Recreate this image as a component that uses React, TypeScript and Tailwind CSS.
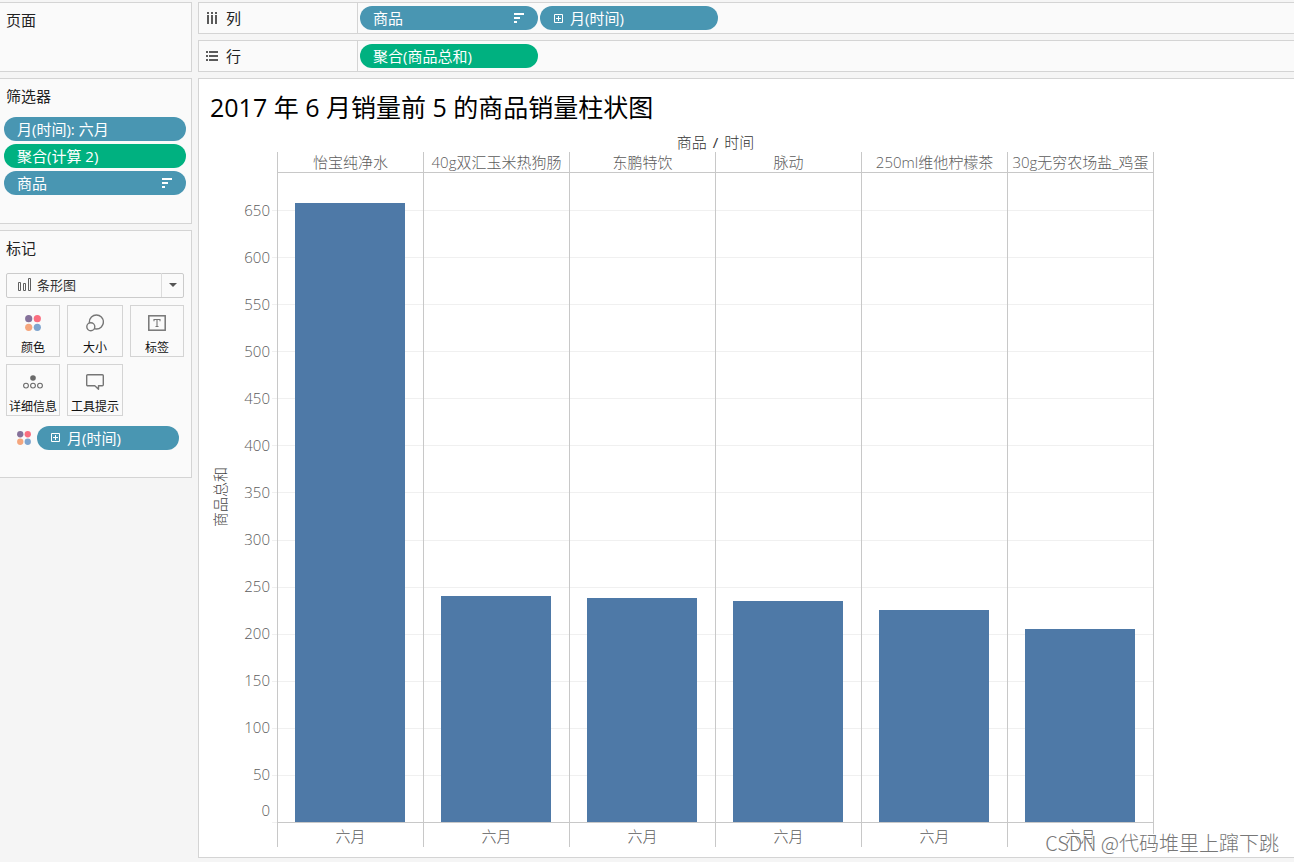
import type { ReactNode } from 'react';

const UI_FONT = "font-['Open_Sans','Noto_Sans_CJK_SC',sans-serif]";

const AXIS_TICKS = [650, 600, 550, 500, 450, 400, 350, 300, 250, 200, 150, 100, 50];
const AXIS_MAX = 689.3;

const PRODUCTS = [
  { name: '怡宝纯净水', value: 657 },
  { name: '40g双汇玉米热狗肠', value: 240 },
  { name: '东鹏特饮', value: 238 },
  { name: '脉动', value: 235 },
  { name: '250ml维他柠檬茶', value: 225 },
  { name: '30g无穷农场盐_鸡蛋', value: 205 },
];

function SortIcon() {
  return (
    <svg width="10" height="10" viewBox="0 0 10 10" fill="currentColor" aria-hidden="true">
      <path d="M0 0h10v2H0zM0 4h6v2H0zM0 8h3v2H0z" />
    </svg>
  );
}

function ExpandIcon() {
  return (
    <svg width="9" height="9" viewBox="0 0 9 9" fill="none" stroke="currentColor" aria-hidden="true">
      <path d="M.5 .5h8v8h-8zM2 4.5h5M4.5 2v5" />
    </svg>
  );
}

function ColumnsIcon() {
  return (
    <svg width="12" height="12" viewBox="0 0 12 12" fill="#5a5a5a" aria-hidden="true">
      <path d="M1 0h2v2H1zM5 0h2v2H5zM9 0h2v2H9zM1 3h2v9H1zM5 3h2v9H5zM9 3h2v9H9z" />
    </svg>
  );
}

function RowsIcon() {
  return (
    <svg width="12" height="10" viewBox="0 0 12 10" fill="#5a5a5a" aria-hidden="true">
      <path d="M0 0h2v2H0zM0 4h2v2H0zM0 8h2v2H0zM3 0h9v2H3zM3 4h9v2H3zM3 8h9v2H3z" />
    </svg>
  );
}

function ColorDots({ size }: { size: number }) {
  return (
    <svg width={size} height={size} viewBox="0 0 16 16" aria-hidden="true">
      <circle cx="3.7" cy="3.7" r="3.6" fill="#85719a" />
      <circle cx="12.3" cy="3.7" r="3.6" fill="#fa6e80" />
      <circle cx="3.7" cy="12.3" r="3.6" fill="#f5a67d" />
      <circle cx="12.3" cy="12.3" r="3.6" fill="#7fa5cf" />
    </svg>
  );
}

function SizeIcon() {
  return (
    <svg width="18" height="18" viewBox="0 0 18 18" fill="#fafafa" stroke="#767676" strokeWidth="1.4" aria-hidden="true">
      <circle cx="10.4" cy="8" r="7" />
      <circle cx="4.8" cy="12.8" r="4" />
    </svg>
  );
}

function LabelIcon() {
  return (
    <svg width="18" height="16" viewBox="0 0 18 16" fill="none" stroke="#767676" aria-hidden="true">
      <rect x="0.8" y="0.8" width="16.4" height="14.4" strokeWidth="1.5" />
      <path d="M6 6.2V4.5h6v1.7M9 4.5v7M7.5 11.5h3" strokeWidth="1.1" />
    </svg>
  );
}

function DetailIcon() {
  return (
    <svg width="20" height="14" viewBox="0 0 20 14" fill="none" stroke="#6a6a6a" strokeWidth="1.1" aria-hidden="true">
      <circle cx="10" cy="3" r="2.8" fill="#6a6a6a" stroke="none" />
      <circle cx="3" cy="10.6" r="2.4" />
      <circle cx="10" cy="10.6" r="2.4" />
      <circle cx="17" cy="10.6" r="2.4" />
    </svg>
  );
}

function TooltipIcon() {
  return (
    <svg width="18" height="16" viewBox="0 0 18 16" fill="none" stroke="#767676" strokeWidth="1.4" strokeLinejoin="round" aria-hidden="true">
      <path d="M1.7 .7h14.6a1 1 0 0 1 1 1v9a1 1 0 0 1-1 1H12.5v3.6L8.8 11.7H1.7a1 1 0 0 1-1-1v-9a1 1 0 0 1 1-1z" />
    </svg>
  );
}

function BarsIcon() {
  return (
    <svg width="14" height="13" viewBox="0 0 14 13" fill="none" stroke="#5f5f5f" aria-hidden="true">
      <path d="M.5 4.5h2v8h-2zM5.5 5.5h2v7h-2zM10.5 .5h2v12h-2z" />
    </svg>
  );
}

type PillProps = { label: string; green?: boolean; sort?: boolean; expand?: boolean; className?: string };

function Pill({ label, green, sort, expand, className = 'w-full' }: PillProps) {
  return (
    <button
      type="button"
      className={`flex h-6 items-center gap-[7px] rounded-full pr-[14px] text-[15px] leading-6 whitespace-nowrap text-white ${
        green ? 'bg-[#00b180]' : 'bg-[#4996b2]'
      } ${expand ? 'pl-[14px]' : 'pl-[13px]'} ${className}`}
    >
      {expand && <ExpandIcon />}
      <span className="flex-1 text-left">{label}</span>
      {sort && <SortIcon />}
    </button>
  );
}

function Card({ title, className, children }: { title: string; className: string; children?: ReactNode }) {
  return (
    <section className={`border-y border-r border-[#d4d4d4] bg-[#fafafa] ${className}`}>
      <h2 className="px-[6px] pt-[5px] text-[15px] leading-6">{title}</h2>
      {children}
    </section>
  );
}

function MarkButton({ icon, label }: { icon: ReactNode; label: string }) {
  return (
    <button
      type="button"
      className="flex h-[52px] flex-col items-center border border-[#d4d4d4] bg-[#fafafa] text-xs leading-4 whitespace-nowrap text-[#111]"
    >
      <span className="flex h-[34px] items-center">{icon}</span>
      <span>{label}</span>
    </button>
  );
}

function Shelf({ icon, label, children }: { icon: ReactNode; label: string; children: ReactNode }) {
  return (
    <section className="flex h-8 border-y border-l border-[#d4d4d4] bg-[#fafafa]">
      <h2 className="flex w-[159px] shrink-0 items-center gap-2 border-r border-[#d4d4d4] pl-[7px] text-[15px]">
        {icon}
        {label}
      </h2>
      <div className="flex items-center gap-[2px] pl-[2px]">{children}</div>
    </section>
  );
}

function Sidebar() {
  return (
    <aside className="flex w-48 shrink-0 flex-col gap-[6px]">
      <Card title="页面" className="h-[70px]" />
      <Card title="筛选器" className="h-[146px]">
        <div className="flex flex-col gap-[3px] pt-[9px] pr-[5px] pl-1">
          <Pill label="月(时间): 六月" />
          <Pill label="聚合(计算 2)" green />
          <Pill label="商品" sort />
        </div>
      </Card>
      <Card title="标记" className="h-[248px]">
        <div className="flex flex-col gap-[7px] pt-3 pr-[7px] pl-[6px]">
          <div className="relative">
            <select
              aria-label="标记类型"
              className="h-[25px] w-full appearance-none rounded-xs border border-[#cbcbcb] bg-[#fafafa] pl-[30px] text-[13px] leading-[22px] text-[#333]"
            >
              <option>条形图</option>
            </select>
            <span className="pointer-events-none absolute inset-y-0 left-3 flex items-center">
              <BarsIcon />
            </span>
            <span className="pointer-events-none absolute inset-y-px right-px flex w-[22px] items-center justify-center border-l border-[#dcdcdc]">
              <svg width="8" height="4" viewBox="0 0 8 4" fill="#555" aria-hidden="true">
                <path d="M0 0h8L4 4z" />
              </svg>
            </span>
          </div>
          <div className="grid grid-cols-[54fr_56fr_54fr] gap-[7px]">
            <MarkButton icon={<ColorDots size={16} />} label="颜色" />
            <MarkButton icon={<SizeIcon />} label="大小" />
            <MarkButton icon={<LabelIcon />} label="标签" />
            <MarkButton icon={<DetailIcon />} label="详细信息" />
            <MarkButton icon={<TooltipIcon />} label="工具提示" />
          </div>
          <div className="flex items-center gap-[6px] pt-[3px] pr-[5px] pl-[11px]">
            <ColorDots size={14} />
            <Pill label="月(时间)" expand className="flex-1" />
          </div>
        </div>
      </Card>
    </aside>
  );
}

function Chart() {
  return (
    <div className="flex text-[15px] font-light text-[#5c5c5c]">
      <div className="flex w-[73px] shrink-0 pt-[39px] pb-[25px]">
        <div className="flex w-[42px] items-center justify-center text-[#444]">
          <span className="rotate-180 leading-5 [text-orientation:sideways] [writing-mode:vertical-rl]">商品总和</span>
        </div>
        <div className="flex flex-1 flex-col pt-[14px] pr-[2px] text-right">
          {AXIS_TICKS.map((tick) => (
            <span key={tick} className="flex flex-1 items-center justify-end">
              {tick}
            </span>
          ))}
          <span className="flex h-6 items-center justify-end">0</span>
        </div>
      </div>
      <div className="w-full max-w-[882px]">
        <div className="flex h-[18px] justify-center gap-[6px] pl-[5px] leading-4 text-[#333]">
          <span>商品</span>
          <span className="font-normal">/</span>
          <span>时间</span>
        </div>
        <div className="grid">
          <div className="col-start-1 row-start-1 flex flex-col pt-[58px] pb-6" aria-hidden="true">
            {AXIS_TICKS.map((tick) => (
              <div key={tick} className="flex-1 border-t border-[#f0f0f0]" />
            ))}
            <div className="h-px bg-[#f0f0f0]" />
          </div>
          <div className="col-start-1 row-start-1 pl-[5px]">
            <div className="grid grid-cols-6 border-r border-[#c8c8c8]">
              {PRODUCTS.map((product) => (
                <div key={product.name} className="min-w-0 border-l border-[#c8c8c8] text-center whitespace-nowrap">
                  <div className="flex h-[21px] items-center justify-center border-b border-[#c8c8c8]">{product.name}</div>
                  <div className="flex h-[650px] items-end border-b border-[#c8c8c8] pr-[18px] pl-[17px]">
                    <div
                      className="w-full bg-[#4e79a7]"
                      style={{ height: `${(product.value / AXIS_MAX) * 100}%` }}
                    />
                  </div>
                  <div className="h-6 pt-px leading-6">六月</div>
                </div>
              ))}
            </div>
          </div>
        </div>
      </div>
    </div>
  );
}

export default function App() {
  return (
    <div className={`flex min-h-screen gap-[6px] bg-[#f5f5f5] pt-[2px] pb-1 text-[#222] ${UI_FONT}`}>
      <Sidebar />
      <main className="flex min-w-0 flex-1 flex-col gap-[6px]">
        <Shelf icon={<ColumnsIcon />} label="列">
          <Pill label="商品" sort className="w-[178px]" />
          <Pill label="月(时间)" expand className="w-[178px]" />
        </Shelf>
        <Shelf icon={<RowsIcon />} label="行">
          <Pill label="聚合(商品总和)" green className="w-[178px]" />
        </Shelf>
        <section className="relative flex-1 border-y border-l border-[#d4d4d4] bg-white pb-[10px]">
          <h1 className="pt-[2px] pl-[11px] text-[25px] leading-[53px] whitespace-nowrap text-black">
            2017 年 6 月销量前 5 的商品销量柱状图
          </h1>
          <Chart />
          <p className="absolute right-[15px] bottom-0 font-['Noto_Sans_CJK_SC',sans-serif] text-xl leading-7 font-light whitespace-nowrap text-[#777] [text-shadow:-1px_-1px_0_#fff]">
            CSDN @代码堆里上蹿下跳
          </p>
        </section>
      </main>
    </div>
  );
}
